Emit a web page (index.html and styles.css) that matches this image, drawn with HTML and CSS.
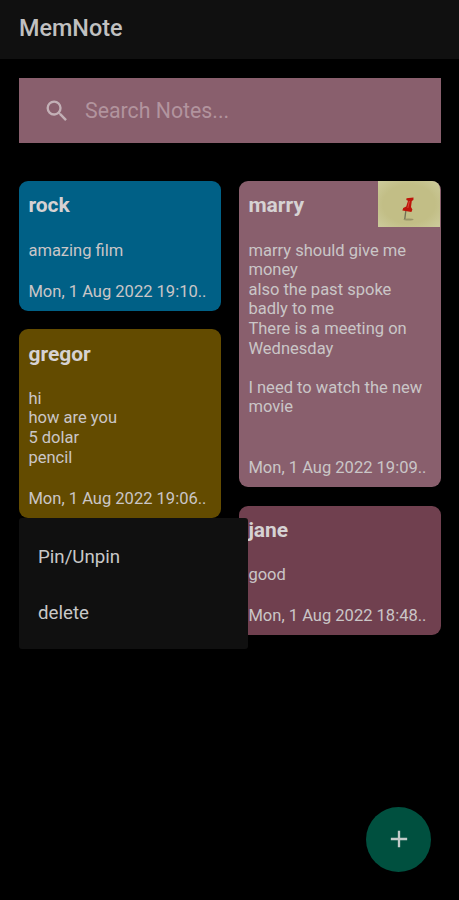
FILE: index.html
```html
<!DOCTYPE html>
<html lang="en">
<head>
    <meta charset="UTF-8">
    <meta name="viewport" content="width=device-width, initial-scale=1.0">
    <title>MemNote</title>
    <link rel="stylesheet" href="styles.css">
</head>
<body>
    <header class="toolbar">
        <h1>MemNote</h1>
    </header>
    <main>
        <label class="search">
            <svg class="search-icon" viewBox="0 0 24 24">
                <path d="M15.5 14h-.79l-.28-.27A6.47 6.47 0 0 0 16 9.5 6.5 6.5 0 1 0 9.5 16c1.61 0 3.09-.59 4.23-1.57l.27.28v.79l5 4.99L20.49 19l-4.99-5zm-6 0a4.5 4.5 0 1 1 0-9 4.5 4.5 0 0 1 0 9z"/>
            </svg>
            <input type="text" placeholder="Search Notes...">
        </label>
        <div class="notes">
            <div class="column">
                <div class="note blue">
                    <h2>rock</h2>
                    <p class="text">amazing film</p>
                    <p class="date">Mon, 1 Aug 2022 19:10..</p>
                </div>
                <div class="note brown">
                    <h2>gregor</h2>
                    <p class="text">hi<br>how are you<br>5 dolar<br>pencil</p>
                    <p class="date">Mon, 1 Aug 2022 19:06..</p>
                    <div class="menu">
                        <div class="menu-item">Pin/Unpin</div>
                        <div class="menu-item">delete</div>
                    </div>
                </div>
            </div>
            <div class="column">
                <div class="note pink">
                    <svg class="pin" viewBox="0 0 62 46">
                        <defs>
                            <radialGradient id="paper" r="0.7">
                                <stop offset="0.6" stop-color="#c2be86"/>
                                <stop offset="1" stop-color="#cdcb9c"/>
                            </radialGradient>
                        </defs>
                        <rect width="62" height="46" fill="url(#paper)"/>
                        <ellipse cx="30.5" cy="38.5" rx="5" ry="1" fill="#999468"/>
                        <path d="M27.8 30L26.8 38" stroke="#706e55" stroke-width="1.3"/>
                        <path d="M28.5 17.2L35.5 16.6L35.4 19L33.8 20L33 26L34.4 28.5L33.4 31L24.4 29.6L25.2 27L28.2 25.6L30 19.8L28.3 19Z" fill="#bd1409"/>
                        <path d="M31.4 20L29.8 27" stroke="#d94a38" stroke-width="1"/>
                    </svg>
                    <h2>marry</h2>
                    <p class="text">marry should give me money<br>also the past spoke badly to me<br>There is a meeting on Wednesday<br><br>I need to watch the new movie<br><br></p>
                    <p class="date">Mon, 1 Aug 2022 19:09..</p>
                </div>
                <div class="note plum">
                    <h2>jane</h2>
                    <p class="text">good</p>
                    <p class="date">Mon, 1 Aug 2022 18:48..</p>
                </div>
            </div>
        </div>
    </main>
    <button class="add">
        <svg viewBox="0 0 24 24">
            <path d="M19 13h-6v6h-2v-6H5v-2h6V5h2v6h6v2z"/>
        </svg>
    </button>
</body>
</html>
```
FILE: styles.css
```css
*{
    box-sizing: border-box;
}
body{
    margin: 0;
    min-height: 900px;
    background: #000;
    color: #cac6c7;
    font-family: Roboto, "Liberation Sans", sans-serif;
    font-size: 16.54px;
    line-height: 19.6px;
}
h1, h2, p{
    margin: 0;
}
.toolbar{
    display: flex;
    align-items: center;
    height: 59px;
    padding: 0 19px 3px;
    background: #101010;
}
.toolbar h1{
    font-size: 23.4px;
    font-weight: 500;
    line-height: 28px;
    color: #c0c0c0;
}
main{
    padding: 19px 18px 0 19px;
}
.search{
    display: flex;
    align-items: center;
    gap: 14.5px;
    height: 65px;
    padding-left: 23.5px;
    background: #895f6d;
}
.search-icon{
    width: 28px;
    height: 28px;
    fill: #c3b0b6;
}
.search input{
    flex: 1;
    min-width: 0;
    padding: 0;
    border: 0;
    outline: 0;
    background: none;
    font: 21.3px Roboto, "Liberation Sans", sans-serif;
}
.search input::placeholder{
    color: #b2949e;
}
.notes{
    display: grid;
    grid-template-columns: 1fr 1fr;
    gap: 18px;
    margin-top: 38px;
}
.column{
    display: flex;
    flex-direction: column;
    gap: 18.7px;
}
.note{
    position: relative;
    padding: 9.4px;
    border-radius: 9px;
}
.note h2{
    margin-bottom: 18.7px;
    font-size: 21px;
    font-weight: bold;
    line-height: 31.5px;
    color: #d6d2d3;
}
.date{
    margin-top: 21.4px;
    white-space: nowrap;
}
.blue{
    background: #006086;
}
.brown{
    background: #634b00;
}
.pink{
    background: #895f6d;
}
.plum{
    background: #70404f;
}
.pin{
    position: absolute;
    top: 0;
    right: 1px;
    width: 62px;
    height: 46px;
    border-top-right-radius: 8px;
}
.menu{
    position: absolute;
    top: 100%;
    left: 0;
    z-index: 1;
    width: 229px;
    padding: 11.5px 0 7.5px;
    border-radius: 3px;
    background: #101010;
    color: #c8c8c8;
    font-size: 18.7px;
}
.menu-item{
    padding-left: 19px;
    line-height: 56px;
}
.add{
    position: fixed;
    right: 28px;
    bottom: 28.5px;
    display: flex;
    align-items: center;
    justify-content: center;
    width: 65px;
    height: 65px;
    padding: 0;
    border: 0;
    border-radius: 50%;
    background: #00503f;
}
.add svg{
    width: 28px;
    height: 28px;
    fill: #c2cbc9;
}
```
